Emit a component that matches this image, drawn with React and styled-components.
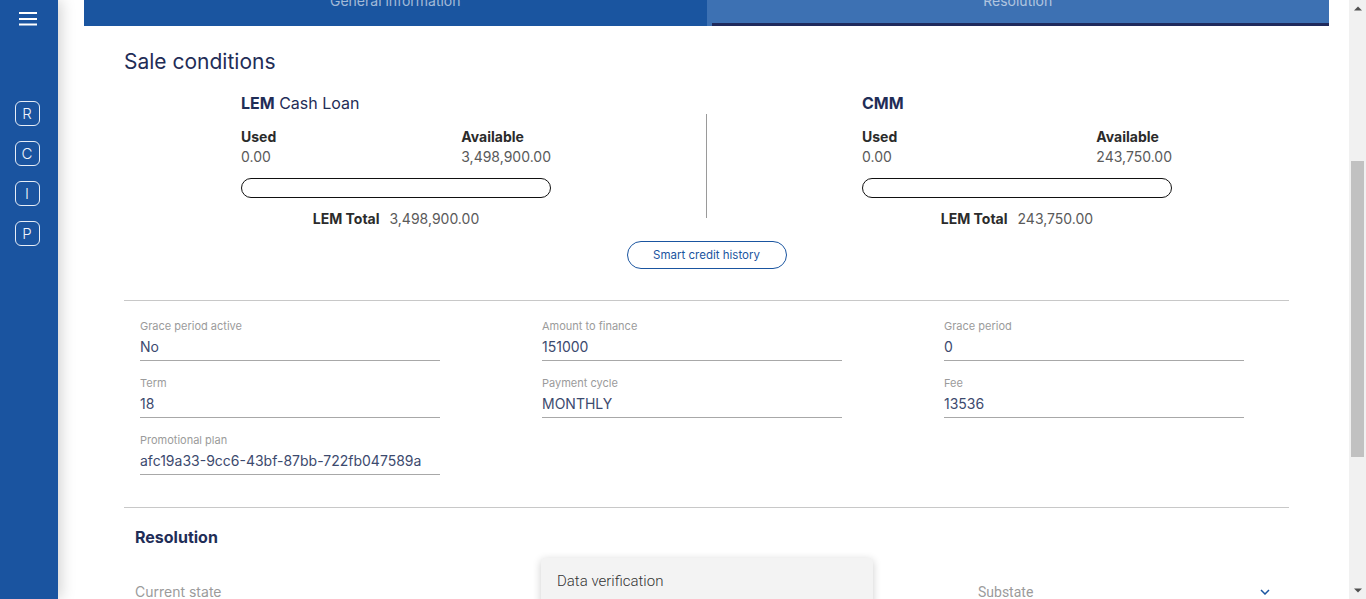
import React, { useLayoutEffect, useRef } from "react";
import styled, { createGlobalStyle } from "styled-components";

const FONT = `"Inter", "Open Sans", sans-serif`;
const NAVY = "#1f2d57";
const SCROLL_TOP = 291;

const Global = createGlobalStyle`
  html, body { margin: 0; padding: 0; height: 100%; overflow: hidden; background: #fff; }
  #root { height: 100vh; }
  * { box-sizing: border-box; }
`;

const Shell = styled.div`
  display: flex;
  height: 100vh;
  font-family: ${FONT};
`;

const Sidebar = styled.nav`
  flex: none;
  width: 58px;
  height: 100%;
  background: #1a54a0;
  position: relative;
  z-index: 2;
  box-shadow: 3px 0 14px rgba(0, 0, 0, 0.18);
  display: flex;
  flex-direction: column;
  align-items: center;
  padding-top: 12px;
`;

const MenuButton = styled.button`
  border: 0;
  background: none;
  padding: 0;
  width: 18px;
  height: 14px;
  display: flex;
  margin-left: -2px;
  margin-bottom: 75px;
`;

const NavLetters = styled.div`
  display: flex;
  flex-direction: column;
  gap: 15px;
`;

const NavLetter = styled.div`
  width: 25px;
  height: 25px;
  border: 1.5px solid #e6edf7;
  border-radius: 6px;
  color: #eef3fa;
  font-size: 15px;
  font-weight: 300;
  display: flex;
  align-items: center;
  justify-content: center;
  margin-left: -4px;
`;

const Main = styled.main`
  flex: 1;
  height: 100%;
  overflow-y: scroll;
  scrollbar-width: none;
  padding: 24px 20px 26px 26px;
  &::-webkit-scrollbar {
    display: none;
  }
`;

const Rail = styled.div`
  flex: none;
  width: 17px;
  height: 100%;
  background: #f1f1f1;
  display: flex;
  flex-direction: column;
`;

const RailArrow = styled.div`
  flex: none;
  height: 17px;
  display: flex;
  align-items: center;
  justify-content: center;
`;

const RailTrack = styled.div`
  flex: 1;
  padding: 0 2px;
`;

const Thumb = styled.div`
  height: 296px;
  background: #c1c1c1;
`;

const HeaderTitle = styled.h1`
  margin: 0 0 16px;
  font-size: 24px;
  line-height: 32px;
  font-weight: 500;
  color: ${NAVY};
`;

const SummaryCard = styled.div`
  height: 169px;
  margin-bottom: 24px;
  border: 1px solid #e4e4e4;
  border-radius: 4px;
  padding: 20px 40px;
  color: #555;
  font-size: 14px;
`;

const Card = styled.section`
  background: #fff;
`;

const Tabs = styled.div`
  display: grid;
  grid-template-columns: 1fr 1fr;
  height: 52px;
`;

const Tab = styled.div`
  position: relative;
  background: ${(p) => (p.$active ? "#3d71b3" : "#1a55a0")};
  color: rgba(255, 255, 255, 0.6);
  font-size: 14px;
  display: flex;
  align-items: center;
  justify-content: center;
  &::after {
    content: "";
    display: ${(p) => (p.$active ? "block" : "none")};
    position: absolute;
    left: 5px;
    right: 0;
    bottom: 0;
    height: 3px;
    background: #1f2a5c;
  }
`;

const Body = styled.div`
  padding: 24px 40px 32px;
`;

const SectionTitle = styled.h2`
  margin: 0;
  font-size: 21px;
  line-height: 24px;
  font-weight: 400;
  color: ${NAVY};
`;

const CreditRow = styled.div`
  display: flex;
  justify-content: center;
  align-items: flex-start;
  gap: 155px;
  margin-top: 19px;
`;

const CreditBlock = styled.div`
  width: 310px;
  display: flex;
  flex-direction: column;
`;

const BlockHeading = styled.div`
  font-size: 16px;
  line-height: 20px;
  color: ${NAVY};
  b { font-weight: 700; }
`;

const Stats = styled.div`
  display: flex;
  justify-content: space-between;
  margin-top: 15px;
`;

const Stat = styled.div`
  display: flex;
  flex-direction: column;
  gap: 2px;
`;

const StatLabel = styled.div`
  font-size: 14px;
  line-height: 18px;
  font-weight: 700;
  color: #2b2b2b;
`;

const StatValue = styled.div`
  font-size: 14px;
  line-height: 18px;
  color: #5a5a5a;
`;

const Bar = styled.div`
  margin-top: 12px;
  height: 20px;
  border: 1px solid #111;
  border-radius: 10px;
  background: #fff;
`;

const Total = styled.div`
  margin-top: 12px;
  text-align: center;
  font-size: 14px;
  line-height: 18px;
  color: #5a5a5a;
  b { font-weight: 700; color: #2b2b2b; margin-right: 10px; }
`;

const VDivider = styled.div`
  width: 1px;
  height: 104px;
  margin-top: 21px;
  background: #9a9a9a;
`;

const ButtonRow = styled.div`
  display: flex;
  justify-content: center;
  margin-top: 13px;
`;

const OutlineButton = styled.button`
  width: 160px;
  height: 28px;
  border: 1px solid #1a55a0;
  border-radius: 14px;
  background: #fff;
  color: #1a55a0;
  font-family: ${FONT};
  font-size: 11.5px;
  font-weight: 400;
  padding: 0;
`;

const HRule = styled.hr`
  border: 0;
  height: 1px;
  background: #c8c8c8;
  margin: ${(p) => p.$top}px 0 0;
`;

const FieldGrid = styled.div`
  display: grid;
  grid-template-columns: repeat(3, 300px);
  column-gap: 102px;
  row-gap: 15px;
  padding-left: 16px;
  margin-top: 18px;
`;

const Field = styled.div`
  display: flex;
  flex-direction: column;
  gap: 4px;
  padding-bottom: 3px;
  border-bottom: 1px solid #a8a8a8;
`;

const FieldLabel = styled.div`
  font-size: 11px;
  line-height: 14px;
  color: #9b9b9b;
`;

const FieldValue = styled.div`
  font-size: 14px;
  line-height: 20px;
  color: #3c4a6e;
`;

const Resolution = styled.div`
  padding-left: 11px;
  margin-top: 19px;
`;

const SubTitle = styled.h3`
  margin: 0;
  font-size: 16px;
  line-height: 20px;
  font-weight: 700;
  color: ${NAVY};
`;

const SelectRow = styled.div`
  position: relative;
  display: grid;
  grid-template-columns: 738px 297px;
  column-gap: 105px;
  margin-top: 35px;
`;

const Select = styled.div`
  display: flex;
  justify-content: space-between;
  align-items: center;
  height: 35px;
  padding-bottom: 14px;
  border-bottom: 1px solid #a8a8a8;
  font-family: ${(p) => (p.$alt ? `"Roboto", sans-serif` : FONT)};
  font-size: 14px;
  line-height: 20px;
  color: #9b9b9b;
`;

const Chevron = styled.svg`
  width: 10px;
  height: 6px;
  margin-right: 5px;
`;

const Menu = styled.ul`
  position: absolute;
  top: -24px;
  left: 406px;
  width: 332px;
  margin: 0;
  padding: 8px 0;
  list-style: none;
  background: #f3f3f3;
  border-radius: 4px;
  box-shadow: 0 2px 8px rgba(0, 0, 0, 0.2);
  z-index: 3;
`;

const MenuItem = styled.li`
  padding: 5px 16px;
  font-family: "Roboto", sans-serif;
  font-size: 15px;
  font-weight: 300;
  line-height: 20px;
  color: #333;
`;

const Comments = styled.div`
  margin-top: 24px;
  display: flex;
  flex-direction: column;
  gap: 4px;
`;

const TextArea = styled.div`
  height: 80px;
  border: 1px solid #c8c8c8;
  border-radius: 4px;
`;

const Actions = styled.div`
  display: flex;
  justify-content: flex-end;
  gap: 16px;
  margin-top: 26px;
`;

const ActionButton = styled.button`
  width: 140px;
  height: 36px;
  border-radius: 18px;
  border: 1px solid #1a55a0;
  background: ${(p) => (p.$primary ? "#1a55a0" : "#fff")};
  color: ${(p) => (p.$primary ? "#fff" : "#1a55a0")};
  font-family: ${FONT};
  font-size: 13px;
`;

const credit = [
  {
    key: "lem",
    heading: (
      <>
        <b>LEM</b> Cash Loan
      </>
    ),
    used: "0.00",
    available: "3,498,900.00",
    total: "3,498,900.00",
  },
  {
    key: "cmm",
    heading: <b>CMM</b>,
    used: "0.00",
    available: "243,750.00",
    total: "243,750.00",
  },
];

const fields = [
  ["Grace period active", "No"],
  ["Amount to finance", "151000"],
  ["Grace period", "0"],
  ["Term", "18"],
  ["Payment cycle", "MONTHLY"],
  ["Fee", "13536"],
  ["Promotional plan", "afc19a33-9cc6-43bf-87bb-722fb047589a"],
];

function CreditCard({ c }) {
  return (
    <CreditBlock>
      <BlockHeading>{c.heading}</BlockHeading>
      <Stats>
        <Stat>
          <StatLabel>Used</StatLabel>
          <StatValue>{c.used}</StatValue>
        </Stat>
        <Stat>
          <StatLabel>Available</StatLabel>
          <StatValue>{c.available}</StatValue>
        </Stat>
      </Stats>
      <Bar />
      <Total>
        <b>LEM Total</b>
        {c.total}
      </Total>
    </CreditBlock>
  );
}

function ScrollRail({ offset }) {
  return (
    <Rail aria-hidden="true">
      <RailArrow>
        <svg width="8" height="5" viewBox="0 0 8 5">
          <path d="M0 4.5 L4 0.5 L8 4.5 Z" fill="#505050" />
        </svg>
      </RailArrow>
      <RailTrack>
        <Thumb style={{ marginTop: offset }} />
      </RailTrack>
      <RailArrow>
        <svg width="8" height="5" viewBox="0 0 8 5">
          <path d="M0 0.5 L4 4.5 L8 0.5 Z" fill="#505050" />
        </svg>
      </RailArrow>
    </Rail>
  );
}

export default function App() {
  const ref = useRef(null);
  useLayoutEffect(() => {
    if (ref.current) ref.current.scrollTop = SCROLL_TOP;
  }, []);

  return (
    <>
      <Global />
      <Shell>
        <Sidebar>
          <MenuButton aria-label="menu">
            <svg width="18" height="14" viewBox="0 0 18 14">
              <rect x="0" y="0" width="18" height="2" fill="#fff" />
              <rect x="0" y="6" width="18" height="2" fill="#fff" />
              <rect x="0" y="11.5" width="18" height="2" fill="#fff" />
            </svg>
          </MenuButton>
          <NavLetters>
            {["R", "C", "I", "P"].map((l) => (
              <NavLetter key={l}>{l}</NavLetter>
            ))}
          </NavLetters>
        </Sidebar>
        <Main ref={ref}>
          <HeaderTitle>Credit request</HeaderTitle>
          <SummaryCard>Request summary</SummaryCard>
          <Card>
            <Tabs>
              <Tab>General information</Tab>
              <Tab $active>Resolution</Tab>
            </Tabs>
            <Body>
              <SectionTitle>Sale conditions</SectionTitle>
              <CreditRow>
                <CreditCard c={credit[0]} />
                <VDivider />
                <CreditCard c={credit[1]} />
              </CreditRow>
              <ButtonRow>
                <OutlineButton>Smart credit history</OutlineButton>
              </ButtonRow>
              <HRule $top={31} />
              <FieldGrid>
                {fields.map(([label, value]) => (
                  <Field key={label}>
                    <FieldLabel>{label}</FieldLabel>
                    <FieldValue>{value}</FieldValue>
                  </Field>
                ))}
              </FieldGrid>
              <HRule $top={32} />
              <Resolution>
                <SubTitle>Resolution</SubTitle>
                <SelectRow>
                  <Select>Current state</Select>
                  <Select $alt>
                    Substate
                    <Chevron viewBox="0 0 10 6">
                      <path d="M1 1 L5 5 L9 1" fill="none" stroke="#1a55a0" strokeWidth="1.5" />
                    </Chevron>
                  </Select>
                  <Menu>
                    <MenuItem>Data verification</MenuItem>
                    <MenuItem>Approved</MenuItem>
                    <MenuItem>Rejected</MenuItem>
                  </Menu>
                </SelectRow>
                <Comments>
                  <FieldLabel>Comments</FieldLabel>
                  <TextArea />
                </Comments>
                <Actions>
                  <ActionButton>Cancel</ActionButton>
                  <ActionButton $primary>Save</ActionButton>
                </Actions>
              </Resolution>
            </Body>
          </Card>
        </Main>
        <ScrollRail offset={144} />
      </Shell>
    </>
  );
}
